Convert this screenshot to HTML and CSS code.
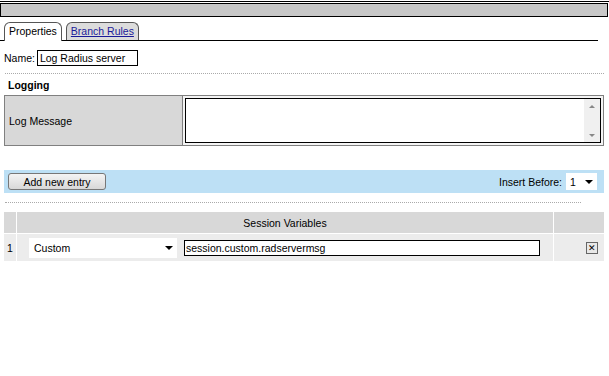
FILE: index.html
```html
<!DOCTYPE html>
<html lang="en">
<head>
    <meta charset="UTF-8">
    <title>Log Radius server</title>
    <link rel="stylesheet" href="styles.css">
</head>
<body>
    <div class="titlebar">
        <div class="titlebox"></div>
    </div>
    <div class="tabs">
        <div class="tab active">Properties</div>
        <div class="tab"><a href="#">Branch Rules</a></div>
    </div>
    <div class="namerow">
        <label>Name:</label>
        <input class="name" type="text" value="Log Radius server">
    </div>
    <div class="dots"></div>
    <div class="section">Logging</div>
    <div class="logtable">
        <div class="logLabel">Log Message</div>
        <div class="logValue">
            <div class="textarea">
                <div class="scroll">
                    <span class="up"></span>
                    <span class="down"></span>
                </div>
            </div>
        </div>
    </div>
    <div class="toolbar">
        <button class="btn">Add new entry</button>
        <div class="insert">
            <span>Insert Before:</span>
            <div class="smallselect">1 <span class="arrow"></span></div>
        </div>
    </div>
    <div class="dots short"></div>
    <div class="vars">
        <div class="row head">
            <div class="c1"></div>
            <div class="c2">Session Variables</div>
            <div class="c3"></div>
        </div>
        <div class="row">
            <div class="c1">1</div>
            <div class="c2 cells">
                <div class="select">Custom <span class="arrow"></span></div>
                <input class="varname" type="text" value="session.custom.radservermsg">
            </div>
            <div class="c3"><span class="del">&#x2715;</span></div>
        </div>
    </div>
</body>
</html>
```

FILE: styles.css
```css
body {
    margin: 0;
    font-family: "Liberation Sans", Arial, sans-serif;
    font-size: 10.5px;
    color: #000;
    background: #fff;
}
.titlebar {
    border-top: 1px solid #000;
    margin-top: 1px;
    padding-top: 1px;
}
.titlebox {
    height: 12px;
    background: #c8c8c8;
    border: 1px solid #000;
    margin-right: 1px;
}
.tabs {
    display: flex;
    gap: 4px;
    margin: 3px 11px 0 0;
    padding-left: 4px;
    border-bottom: 1px solid #000;
    height: 20px;
    align-items: flex-end;
}
.tab {
    height: 17px;
    line-height: 17px;
    padding: 0 4px;
    border: 1px solid #555;
    border-bottom: none;
    border-radius: 6px 6px 0 0;
    background: #dcdcdc;
}
.tab.active {
    background: #fff;
    height: 18px;
    margin-bottom: -1px;
}
.tab a {
    color: #1a1a99;
}
.namerow {
    display: flex;
    align-items: center;
    gap: 2px;
    padding: 9px 4px 0;
}
.name {
    width: 95px;
    height: 14px;
    border: 1px solid #000;
    padding: 0 2px;
    font: inherit;
    margin: 0;
}
.dots {
    border-top: 1px dotted #aaa;
    margin: 7px 5px 0;
}
.dots.short {
    margin: 9px 28px 0 5px;
}
.section {
    font-weight: bold;
    padding: 5px 8px 0;
    height: 16px;
}
.logtable {
    display: flex;
    margin: 0 5px 0 4px;
    height: 49px;
    border: 1px solid #808080;
    background: #d8d8d8;
}
.logLabel {
    width: 178px;
    display: flex;
    align-items: center;
    padding-left: 4px;
    border-right: 1px solid #808080;
    box-sizing: border-box;
}
.logValue {
    flex: 1;
    background: #f4f4f4;
    padding: 2px;
    display: flex;
}
.textarea {
    flex: 1;
    border: 1px solid #000;
    background: #fff;
    display: flex;
    justify-content: flex-end;
}
.scroll {
    width: 16px;
    background: #f0f0f0;
    display: flex;
    flex-direction: column;
    justify-content: space-between;
    align-items: center;
    padding: 6px 0 5px;
}
.up, .down {
    width: 0;
    height: 0;
    border-left: 3px solid transparent;
    border-right: 3px solid transparent;
}
.up {
    border-bottom: 3px solid #888;
}
.down {
    border-top: 3px solid #888;
}
.toolbar {
    display: flex;
    justify-content: space-between;
    align-items: center;
    margin: 24px 5px 0 4px;
    height: 23px;
    background: #bde0f5;
    padding: 0 7px 0 4px;
}
.btn {
    width: 98px;
    height: 17px;
    font: inherit;
    padding: 0;
    border: 1px solid #777;
    border-radius: 3px;
    background: linear-gradient(#f4f4f4, #d8d8d8);
}
.insert {
    display: flex;
    align-items: center;
    gap: 4px;
}
.smallselect {
    width: 23px;
    height: 17px;
    background: #fff;
    padding: 0 4px;
    display: flex;
    align-items: center;
    justify-content: space-between;
}
.arrow {
    width: 0;
    height: 0;
    border-left: 4px solid transparent;
    border-right: 4px solid transparent;
    border-top: 4px solid #000;
}
.vars {
    margin: 9px 5px 0 4px;
}
.row {
    display: flex;
    background: #ececec;
    height: 27px;
    align-items: stretch;
}
.row.head {
    background: #d8d8d8;
    height: 21px;
    border-bottom: 1px solid #fff;
}
.c1 {
    width: 13px;
    border-right: 1px solid #fff;
    display: flex;
    align-items: center;
    padding-left: 3px;
    box-sizing: border-box;
}
.c2 {
    flex: 1;
    display: flex;
    align-items: center;
    justify-content: center;
}
.c3 {
    width: 44px;
    border-left: 1px solid #fff;
    display: flex;
    align-items: center;
    justify-content: flex-end;
    padding-right: 6px;
}
.cells {
    justify-content: flex-start;
    gap: 7px;
    padding-left: 12px;
}
.select {
    width: 139px;
    height: 20px;
    background: #fff;
    display: flex;
    align-items: center;
    justify-content: space-between;
    padding: 0 4px 0 5px;
}
.varname {
    width: 352px;
    height: 14px;
    border: 1px solid #000;
    margin: 0;
    padding: 0 1px;
    font: inherit;
}
.del {
    width: 10px;
    height: 10px;
    border: 1px solid #666;
    background: #e8e8e8;
    font-size: 9px;
    line-height: 10px;
    text-align: center;
}
```
